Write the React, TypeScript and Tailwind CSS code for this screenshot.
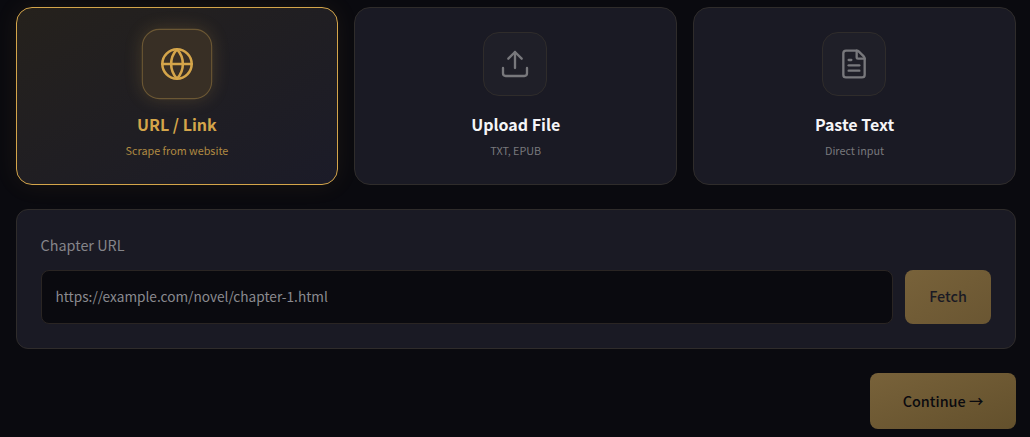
import { Globe, Upload, FileText } from "lucide-react";

const font = "font-['Noto_Sans_CJK_SC','Noto_Sans_CJK_JP',sans-serif]";

function Card({ icon, title, sub, active }: { icon: React.ReactNode; title: string; sub: string; active?: boolean }) {
  return (
    <div
      className={
        "flex-1 min-w-0 h-[178px] rounded-2xl border p-6 flex flex-col items-center " +
        (active
          ? "border-[#d4a54a] bg-gradient-to-br from-[#25211c] to-[#1b1b28] shadow-[0_0_24px_rgba(212,165,74,0.08)]"
          : "border-[#2f2c2b] bg-[#1a1a24]")
      }
    >
      <div
        className={
          "w-16 h-16 rounded-2xl border flex items-center justify-center mb-4 " +
          (active
            ? "scale-110 border-[#6b5734] bg-[#382f25] text-[#d4a54a] shadow-[0_0_16px_rgba(212,165,74,0.2)]"
            : "mr-px border-[#2f2c2b] bg-[#1f1f28] text-[#78787c]")
        }
      >
        {icon}
      </div>
      <div className={"text-base leading-6 font-semibold " + (active ? "text-[#d4a54a]" : "text-[#f5f5f7]")}>{title}</div>
      <div className={"text-[10.8px] leading-4 mt-1.5 " + (active ? "text-[#b08a42]" : "text-[#78787c]")}>{sub}</div>
    </div>
  );
}

export default function App() {
  return (
    <div className={"w-full h-[437px] overflow-hidden bg-[#0a0a0f] pl-[15.5px] pr-3.5 pt-[7px] " + font}>
      <div className="flex gap-4">
        <Card active icon={<Globe size={32} strokeWidth={1.75} />} title="URL / Link" sub="Scrape from website" />
        <Card icon={<Upload size={32} strokeWidth={1.75} />} title="Upload File" sub="TXT, EPUB" />
        <Card icon={<FileText size={32} strokeWidth={1.75} />} title="Paste Text" sub="Direct input" />
      </div>
      <div className="mt-6 rounded-xl border border-[#2f2c2b] bg-[#1a1a24] p-6">
        <div className="text-[14.4px] leading-[22px] mb-3.5 text-[#85858a]">Chapter URL</div>
        <div className="flex gap-3">
          <div className="flex-1 h-[54px] rounded-lg border border-[#2a2523] bg-[#0a0a0f] pl-3.5 pb-0.5 flex items-center text-[#8a8a8f] text-[13.65px]">
            https://example.com/novel/chapter-1.html
          </div>
          <button className="w-[86px] h-[54px] rounded-lg pb-0.5 bg-gradient-to-br from-[#78623a] to-[#6a5632] text-[#1a1a24] text-[14.4px] font-medium">
            Fetch
          </button>
        </div>
      </div>
      <div className="flex justify-end mt-6">
        <button className="w-[146px] h-14 rounded-lg bg-gradient-to-br from-[#78623a] to-[#63502c] text-[#0a0a0f] text-[14.4px] font-medium">
          Continue →
        </button>
      </div>
    </div>
  );
}
